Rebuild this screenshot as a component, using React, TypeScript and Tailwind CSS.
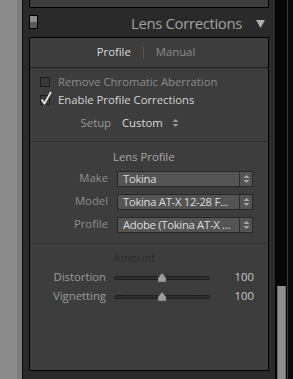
import React from "react";

const font = { fontFamily: '"Open Sans", "Noto Sans", sans-serif' };

function Toggle() {
  return (
    <div className="absolute left-[6px] top-[15px] w-[9px] h-[14px] border border-black flex flex-col">
      <div className="h-[6px] bg-[#8c8c8c]" />
      <div className="flex-1 bg-[#5a5a5a]" />
    </div>
  );
}

function Checkbox({ checked }: { checked?: boolean }) {
  return (
    <div className="relative w-[10px] h-[10px] border border-[#1e1e1e] bg-[#3a3a3a] shrink-0">
      {checked && (
        <svg viewBox="0 0 12 14" className="absolute -left-[1px] -top-[5px] w-[12px] h-[14px]">
          <path d="M1.5 8.5 L4.5 12.5 L11 1" stroke="#e6e6e6" strokeWidth="1.8" fill="none" />
        </svg>
      )}
    </div>
  );
}

function UpDown({ color = "#9a9a9a" }: { color?: string }) {
  return (
    <svg viewBox="0 0 7 10" className="w-[7px] h-[10px]">
      <path d="M0.5 4 L3.5 1 L6.5 4 Z" fill={color} />
      <path d="M0.5 6 L3.5 9 L6.5 6 Z" fill={color} />
    </svg>
  );
}

function SelectRow({ label, value }: { label: string; value: string }) {
  return (
    <div className="flex items-center h-[23px]">
      <div className="w-[78px] text-right text-[#8f8f8f]">{label}</div>
      <div className="ml-[9px] flex w-[136px] h-[16px] border border-[#262626] bg-[#545454]">
        <div className="flex-1 pl-[5px] leading-[14px] tracking-[-0.3px] text-[#dedede] whitespace-nowrap overflow-hidden">
          {value}
        </div>
        <div className="w-[13px] border-l border-[#2e2e2e] flex items-center justify-center">
          <UpDown color="#a8a8a8" />
        </div>
      </div>
    </div>
  );
}

function SliderRow({ label, value }: { label: string; value: string }) {
  return (
    <div className="flex items-center h-[19px]">
      <div className="w-[76px] text-right text-[#9c9c9c]">{label}</div>
      <div className="relative ml-[8px] w-[96px] h-[10px]">
        <div className="absolute left-[12px] right-[12px] top-0 h-[1px] border-t border-dotted border-[#363636]" />
        <div className="absolute left-0 right-0 top-[3px] h-[4px] rounded-full border border-[#1f1f1f] bg-[#2e2e2e]" />
        <svg viewBox="0 0 10 10" className="absolute left-[43px] top-0 w-[10px] h-[10px]">
          <path d="M5 0 L9 5 L9 9 L1 9 L1 5 Z" fill="#9e9e9e" stroke="#5a5a5a" strokeWidth="0.6" />
        </svg>
      </div>
      <div className="w-[44px] text-right text-[#c8c8c8]">{value}</div>
    </div>
  );
}

export default function App() {
  return (
    <div className="flex w-[293px] h-[379px] overflow-hidden text-[11.3px] bg-black" style={font}>
      <div className="w-[17px] bg-[#8b8b8b]" />
      <div className="w-[5px] bg-[#7d7d7d]" />
      <div className="w-[1px] bg-[#0c0c0c]" />

      <div className="relative w-[252px] bg-[#2a2a2a] flex flex-col">
        <div className="mx-[6px] h-[8px] bg-[#3c3c3c] border-x border-b border-black" />
        <Toggle />
        <div className="h-[29px] pt-[2px] flex items-center justify-end pr-[10px] gap-[14px]">
          <span className="text-[15px] tracking-[-0.4px] text-[#a3a3a3]">Lens Corrections</span>
          <svg viewBox="0 0 9 9" className="w-[9px] h-[9px]">
            <path d="M0 1 L9 1 L4.5 9 Z" fill="#b0b0b0" />
          </svg>
        </div>

        <div className="mx-[6px] h-[334px] bg-[#3d3d3d] border border-black flex flex-col">
          <div className="h-[30px] flex items-center justify-center pr-[6px] border-b border-[#1e1e1e]">
            <span className="text-[#dcdcdc] mr-[12px]">Profile</span>
            <span className="w-px h-[11px] bg-[#555]" />
            <span className="text-[#8c8c8c] ml-[12px]">Manual</span>
          </div>

          <div className="pt-[5px] pb-[4px] border-b border-[#303030]">
            <div className="flex items-center h-[18px] pl-[10px] gap-[8px]">
              <Checkbox />
              <span className="text-[#8c8c8c]">Remove Chromatic Aberration</span>
            </div>
            <div className="flex items-center h-[18px] pl-[10px] gap-[8px]">
              <Checkbox checked />
              <span className="text-[#d6d6d6]">Enable Profile Corrections</span>
            </div>
            <div className="flex items-center h-[28px]">
              <span className="w-[81px] text-right text-[#9a9a9a]">Setup</span>
              <span className="ml-[11px] text-[#dcdcdc] mr-[9px]">Custom</span>
              <UpDown />
            </div>
          </div>

          <div className="pt-[5px] pb-[7px] border-b border-[#303030]">
            <div className="h-[20px] flex items-center pl-[83px] text-[#a8a8a8]">Lens Profile</div>
            <SelectRow label="Make" value="Tokina" />
            <SelectRow label="Model" value="Tokina AT-X 12-28 F..." />
            <SelectRow label="Profile" value="Adobe (Tokina AT-X ..." />
          </div>

          <div className="pt-[4px]">
            <div className="h-[20px] flex items-center pl-[83px] text-[#2a2a2a]">Amount</div>
            <SliderRow label="Distortion" value="100" />
            <SliderRow label="Vignetting" value="100" />
          </div>
        </div>
      </div>

      <div className="w-[1px] bg-black" />
      <div className="w-[11px] bg-[#070707] flex flex-col">
        <div className="h-[286px]" />
        <div className="flex-1 mx-[1px] bg-[#8e8e8e] border-x border-[#6a6a6a]" />
      </div>
      <div className="w-[1px] bg-[#3a3a3a]" />
      <div className="flex-1 bg-[#0a0a0a]" />
    </div>
  );
}
